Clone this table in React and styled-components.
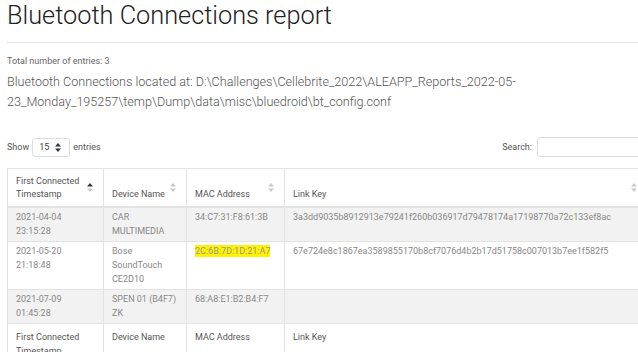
import React from "react";
import styled, { createGlobalStyle } from "styled-components";

const GlobalStyle = createGlobalStyle`
  html, body {
    margin: 0;
    padding: 0;
    background: #fff;
    overflow: hidden;
  }
  body {
    font-family: Roboto, "Liberation Sans", Arial, sans-serif;
  }
`;

const rows = [
  {
    ts: "2021-04-04 23:15:28",
    name: "CAR MULTIMEDIA",
    mac: "34:C7:31:F8:61:3B",
    key: "3a3dd9035b8912913e79241f260b036917d79478174a17198770a72c133ef8ac",
  },
  {
    ts: "2021-05-20 21:18:48",
    name: "Bose SoundTouch CE2D10",
    mac: "2C:6B:7D:1D:21:A7",
    key: "67e724e8c1867ea3589855170b8cf7076d4b2b17d51758c007013b7ee1f582f5",
    marked: true,
  },
  {
    ts: "2021-07-09 01:45:28",
    name: "SPEN 01 (B4F7) ZK",
    mac: "68:A8:E1:B2:B4:F7",
    key: "",
  },
];

const columns = [
  { label: "First Connected Timestamp", width: 96, sorted: true },
  { label: "Device Name", width: 83 },
  { label: "MAC Address", width: 98 },
  { label: "Link Key", width: 363 },
];

const SortIcon = ({ up = "#c8c8c8", down = "#c8c8c8" }) => (
  <svg width="6" height="9" viewBox="0 0 6 9">
    <path d="M0 3.6 L3 0 L6 3.6 Z" fill={up} />
    <path d="M0 5.4 L3 9 L6 5.4 Z" fill={down} />
  </svg>
);

const App = () => {
  return (
    <Page>
      <GlobalStyle />
      <Title>Bluetooth Connections report</Title>
      <Rule />
      <Total>Total number of entries: 3</Total>
      <Location>
        Bluetooth Connections located at:
        D:\Challenges\Cellebrite_2022\ALEAPP_Reports_2022-05-23_Monday_195257\temp\Dump\data\misc\bluedroid\bt_config.conf
      </Location>
      <Controls>
        <Length>
          Show
          <Select>
            <span>15</span>
            <SortIcon up="#333" down="#333" />
          </Select>
          entries
        </Length>
        <Filter>
          Search:
          <SearchBox />
        </Filter>
      </Controls>
      <Table>
        <colgroup>
          {columns.map((c) => (
            <col key={c.label} style={{ width: c.width }} />
          ))}
        </colgroup>
        <thead>
          <tr>
            {columns.map((c) => (
              <HeadCell key={c.label}>
                {c.label}
                <IconSlot>
                  <SortIcon up={c.sorted ? "#333" : "#c8c8c8"} />
                </IconSlot>
              </HeadCell>
            ))}
          </tr>
        </thead>
        <tbody>
          {rows.map((r, i) => (
            <Row key={r.mac} $odd={i % 2 === 0}>
              <Cell>{r.ts}</Cell>
              <Cell>{r.name}</Cell>
              <Cell>{r.marked ? <Marker>{r.mac}</Marker> : r.mac}</Cell>
              <Cell>{r.key}</Cell>
            </Row>
          ))}
        </tbody>
        <tfoot>
          <tr>
            {columns.map((c) => (
              <FootCell key={c.label}>{c.label}</FootCell>
            ))}
          </tr>
        </tfoot>
      </Table>
    </Page>
  );
};

export default App;

const Page = styled.div`
  width: 640px;
  padding: 0 0 0 7px;
`;

const Title = styled.h1`
  margin: 0;
  padding-top: 1px;
  font-size: 25.3px;
  line-height: 30px;
  font-weight: 300;
  color: #222;
`;

const Rule = styled.hr`
  margin: 11px 0 0 0;
  border: none;
  border-top: 1px solid #e5e5e5;
`;

const Total = styled.div`
  margin-top: 12px;
  font-size: 9px;
  line-height: 12px;
  color: #666;
`;

const Location = styled.div`
  margin-top: 5px;
  width: 525px;
  font-size: 12.6px;
  line-height: 20px;
  font-weight: 300;
  color: #555;
`;

const Controls = styled.div`
  margin-top: 25px;
  display: flex;
  justify-content: space-between;
  align-items: center;
  font-size: 9px;
  color: #555;
`;

const Length = styled.label`
  display: flex;
  align-items: center;
  gap: 3px;
`;

const Select = styled.div`
  width: 38px;
  height: 19px;
  box-sizing: border-box;
  border: 1px solid #ddd;
  border-radius: 3px;
  display: flex;
  align-items: center;
  justify-content: space-between;
  padding: 0 8px 0 6px;
  font-size: 9px;
  color: #444;
`;

const Filter = styled.label`
  display: flex;
  align-items: center;
  gap: 5px;
  margin-right: -7px;
`;

const SearchBox = styled.div`
  width: 117px;
  height: 20px;
  box-sizing: border-box;
  border: 1px solid #ddd;
  border-radius: 3px;
`;

const Table = styled.table`
  margin-top: 11px;
  width: 640px;
  table-layout: fixed;
  border-collapse: collapse;
  border: 1px solid #e3e3e3;
  font-size: 9px;
`;

const HeadCell = styled.th`
  position: relative;
  text-align: left;
  vertical-align: bottom;
  font-weight: 400;
  color: #555;
  line-height: 12.5px;
  padding: 6px 20px 6px 8px;
  border-left: 1px solid #e3e3e3;
  border-bottom: 2px solid #e3e3e3;
`;

const IconSlot = styled.span`
  position: absolute;
  right: 10px;
  top: 50%;
  margin-top: -5px;
  line-height: 0;
`;

const Row = styled.tr`
  background: ${(p) => (p.$odd ? "#f2f2f2" : "#fff")};
  border-top: 1px solid #e3e3e3;
`;

const Cell = styled.td`
  vertical-align: top;
  color: #888;
  line-height: 14px;
  padding: 2px 8px 3px 8px;
  border-left: 1px solid #e3e3e3;
`;

const Marker = styled.span`
  background: #fff200;
  color: #999;
  padding: 1px 0;
`;

const FootCell = styled.th`
  text-align: left;
  vertical-align: top;
  font-weight: 400;
  color: #555;
  line-height: 14px;
  padding: 6px 8px;
  border-left: 1px solid #e3e3e3;
  border-top: 1px solid #e3e3e3;
`;
